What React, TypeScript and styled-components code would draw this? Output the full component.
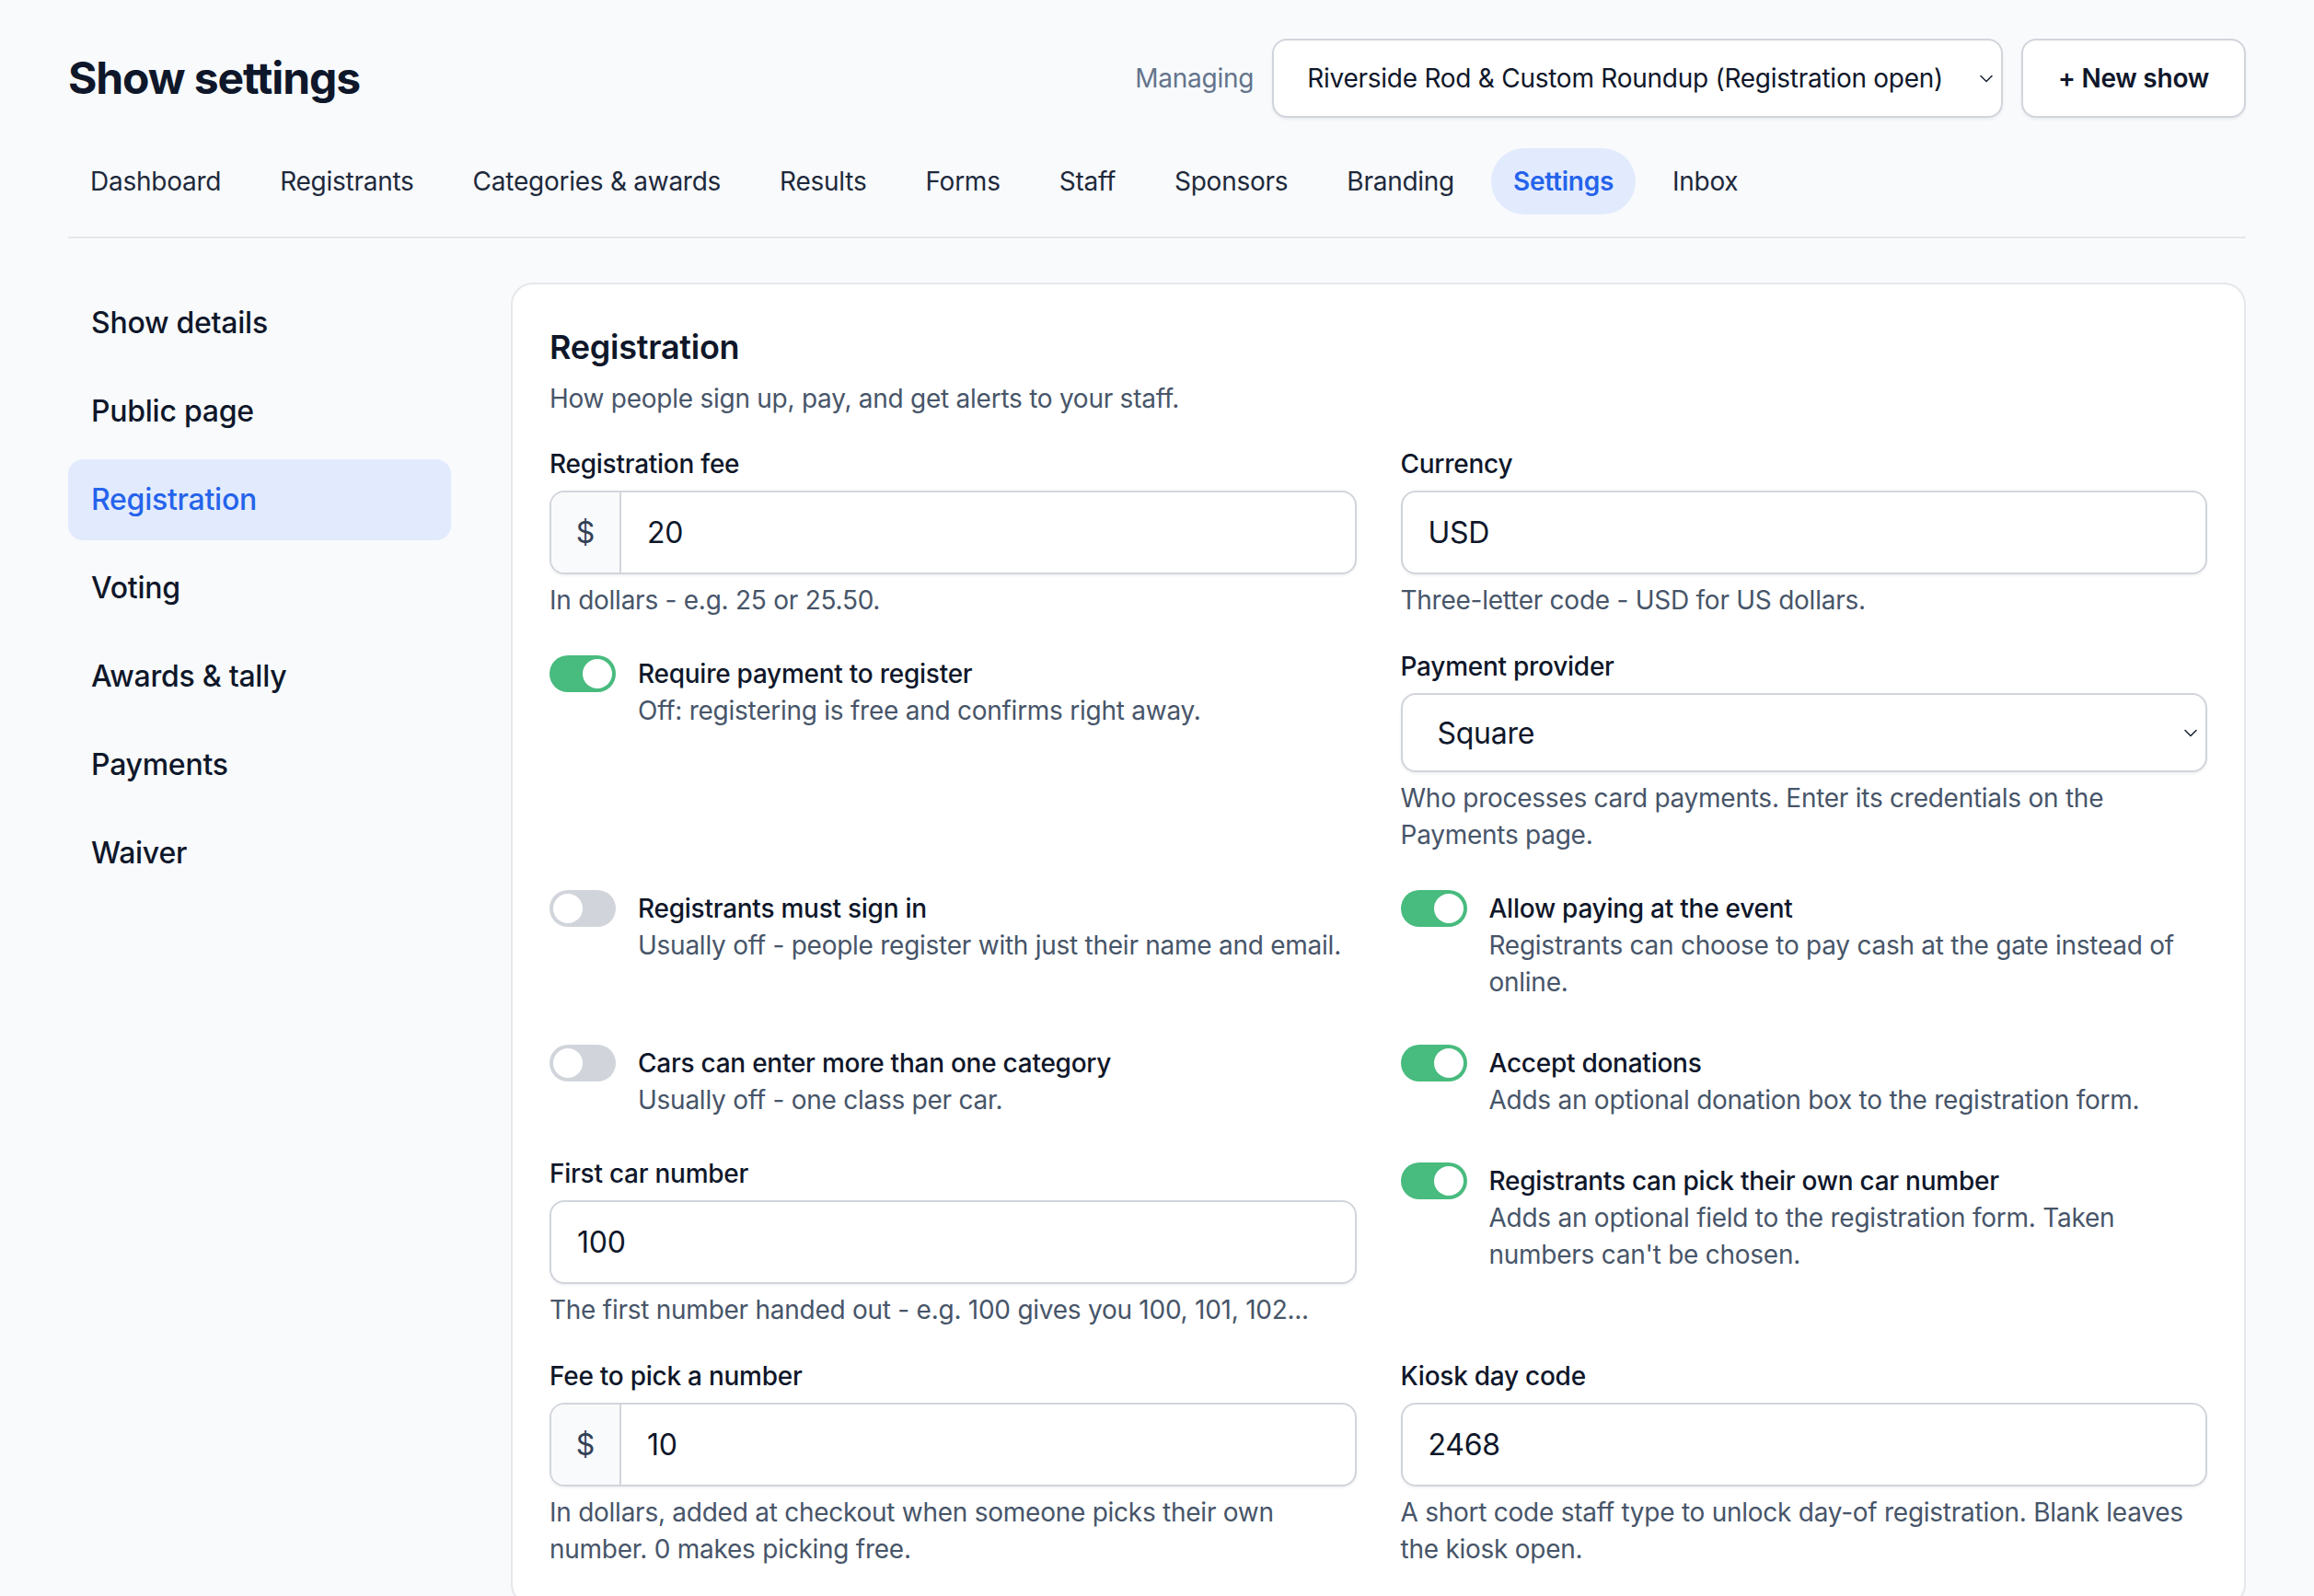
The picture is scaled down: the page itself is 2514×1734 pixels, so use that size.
import React from "react";
import styled, {createGlobalStyle} from "styled-components";

const GlobalStyle = createGlobalStyle`
  * {
    box-sizing: border-box;
  }
  body {
    margin: 0;
    background: #f8fafc;
    font-family: Inter, "Noto Sans", "Liberation Sans", sans-serif;
    letter-spacing: -0.016em;
    color: #0f172a;
  }
`;

const StyledPage = styled.div`
  height: 100vh;
  overflow: hidden;
  padding: 41px 74px 0;
`;

const StyledHeader = styled.header`
  display: flex;
  align-items: center;
  justify-content: space-between;
  height: 88px;
`;

const StyledTitle = styled.h1`
  margin: 0;
  font-size: 48px;
  line-height: 64px;
  font-weight: 700;
  letter-spacing: -1.1px;
  color: #0f172a;
`;

const StyledHeaderControls = styled.div`
  display: flex;
  align-items: center;
  gap: 20px;
`;

const StyledMuted = styled.span`
  font-size: 28px;
  line-height: 40px;
  color: #64748b;
`;

const StyledSelect = styled.div<{ $height: number; $padLeft: number; $fontSize: number }>`
  display: flex;
  align-items: center;
  gap: 40px;
  height: ${p => p.$height}px;
  padding: 0 9px 0 ${p => p.$padLeft}px;
  background: #fff;
  border: 2px solid #d1d5db;
  border-radius: 16px;
  box-shadow: 0 2px 3px rgba(15, 23, 42, 0.06);
  font-size: ${p => p.$fontSize}px;
  color: #0f172a;
  white-space: nowrap;
`;

const StyledSelectText = styled.span`
  flex: 1;
`;

const StyledButton = styled.button`
  height: 86px;
  padding: 0 38px;
  background: #fff;
  border: 2px solid #d1d5db;
  border-radius: 16px;
  box-shadow: 0 2px 3px rgba(15, 23, 42, 0.06);
  font-family: inherit;
  letter-spacing: inherit;
  font-size: 28px;
  font-weight: 600;
  color: #0f172a;
`;

const StyledTabBar = styled.nav`
  display: flex;
  gap: 16px;
  margin-top: 32px;
  padding-bottom: 24px;
  border-bottom: 2px solid #e5e7eb;
`;

const StyledTab = styled.a<{ $active?: boolean }>`
  padding: 16px 24px;
  border-radius: 9999px;
  font-size: 28px;
  line-height: 40px;
  font-weight: ${p => (p.$active ? 600 : 400)};
  color: ${p => (p.$active ? "#2563eb" : "#1e293b")};
  background: ${p => (p.$active ? "#e2ebfd" : "transparent")};
`;

const StyledBody = styled.div`
  display: flex;
  align-items: flex-start;
  gap: 65px;
  margin-top: 48px;
`;

const StyledSideNav = styled.aside`
  display: flex;
  flex-direction: column;
  gap: 8px;
  width: 416px;
  flex-shrink: 0;
`;

const StyledSideItem = styled.a<{ $active?: boolean }>`
  padding: 20px 25px;
  border-radius: 16px;
  font-size: 32px;
  line-height: 48px;
  font-weight: 500;
  color: ${p => (p.$active ? "#2563eb" : "#0f172a")};
  background: ${p => (p.$active ? "#e2ebfd" : "transparent")};
`;

const StyledCard = styled.section`
  flex: 1;
  background: #fff;
  border: 2px solid #e5e7eb;
  border-radius: 24px;
  padding: 40px;
`;

const StyledCardTitle = styled.h2`
  margin: 0;
  font-size: 36px;
  line-height: 56px;
  font-weight: 600;
  color: #0f172a;
`;

const StyledHelp = styled.p`
  margin: 8px 0 0;
  font-size: 28px;
  line-height: 40px;
  color: #475569;
`;

const StyledGrid = styled.div`
  display: grid;
  grid-template-columns: 1fr 1fr;
  column-gap: 48px;
  row-gap: 32px;
  margin-top: 31px;
`;

const StyledField = styled.div`
  display: flex;
  flex-direction: column;
`;

const StyledLabel = styled.label`
  font-size: 28px;
  line-height: 40px;
  font-weight: 500;
  color: #0f172a;
  margin-bottom: 9px;
`;

const StyledInputBox = styled.div`
  display: flex;
  height: 91px;
  background: #fff;
  border: 2px solid #d1d5db;
  border-radius: 16px;
  box-shadow: 0 2px 3px rgba(15, 23, 42, 0.05);
  overflow: hidden;
`;

const StyledPrefix = styled.span`
  display: flex;
  align-items: center;
  justify-content: center;
  width: 76px;
  background: #f8fafc;
  border-right: 2px solid #d1d5db;
  font-size: 32px;
  color: #334155;
`;

const StyledValue = styled.span`
  display: flex;
  align-items: center;
  padding: 0 28px;
  font-size: 32px;
  color: #0f172a;
`;

const StyledToggleRow = styled.div`
  display: flex;
  align-items: flex-start;
  gap: 24px;
  padding: 8px 0;
`;

const StyledSwitch = styled.span<{ $on: boolean }>`
  display: flex;
  justify-content: ${p => (p.$on ? "flex-end" : "flex-start")};
  flex-shrink: 0;
  width: 72px;
  height: 40px;
  padding: 4px;
  border-radius: 20px;
  background: ${p => (p.$on ? "#48bb7e" : "#d1d5db")};
`;

const StyledKnob = styled.span`
  width: 32px;
  height: 32px;
  border-radius: 50%;
  background: #fff;
`;

const StyledToggleText = styled.div`
  display: flex;
  flex-direction: column;
`;

const StyledToggleTitle = styled.span`
  font-size: 28px;
  line-height: 40px;
  font-weight: 500;
  color: #0f172a;
`;

const StyledToggleDesc = styled.span`
  font-size: 28px;
  line-height: 40px;
  color: #475569;
`;

function Chevron() {
    return (
        <svg width="14" height="9" viewBox="0 0 14 9" fill="none">
            <path d="M1 1.5l6 6 6-6" stroke="#1f2937" strokeWidth="1.6" strokeLinecap="round" strokeLinejoin="round" />
        </svg>
    );
}

function Toggle({on, title, desc}: { on: boolean; title: string; desc: string }) {
    return (
        <StyledToggleRow>
            <StyledSwitch $on={on}>
                <StyledKnob />
            </StyledSwitch>
            <StyledToggleText>
                <StyledToggleTitle>{title}</StyledToggleTitle>
                <StyledToggleDesc>{desc}</StyledToggleDesc>
            </StyledToggleText>
        </StyledToggleRow>
    );
}

function Field({label, value, prefix, help}: { label: string; value: string; prefix?: string; help: string }) {
    return (
        <StyledField>
            <StyledLabel>{label}</StyledLabel>
            <StyledInputBox>
                {prefix && <StyledPrefix>{prefix}</StyledPrefix>}
                <StyledValue>{value}</StyledValue>
            </StyledInputBox>
            <StyledHelp>{help}</StyledHelp>
        </StyledField>
    );
}

const tabs = ["Dashboard", "Registrants", "Categories & awards", "Results", "Forms", "Staff", "Sponsors", "Branding", "Settings", "Inbox"];
const sections = ["Show details", "Public page", "Registration", "Voting", "Awards & tally", "Payments", "Waiver"];

export default function App() {
    return (
        <StyledPage>
            <GlobalStyle />
            <StyledHeader>
                <StyledTitle>Show settings</StyledTitle>
                <StyledHeaderControls>
                    <StyledMuted>Managing</StyledMuted>
                    <StyledSelect $height={86} $padLeft={36} $fontSize={28}>
                        <StyledSelectText>Riverside Rod &amp; Custom Roundup (Registration open)</StyledSelectText>
                        <Chevron />
                    </StyledSelect>
                    <StyledButton>+ New show</StyledButton>
                </StyledHeaderControls>
            </StyledHeader>

            <StyledTabBar>
                {tabs.map(t => (
                    <StyledTab key={t} $active={t === "Settings"}>{t}</StyledTab>
                ))}
            </StyledTabBar>

            <StyledBody>
                <StyledSideNav>
                    {sections.map(s => (
                        <StyledSideItem key={s} $active={s === "Registration"}>{s}</StyledSideItem>
                    ))}
                </StyledSideNav>

                <StyledCard>
                    <StyledCardTitle>Registration</StyledCardTitle>
                    <StyledHelp>How people sign up, pay, and get alerts to your staff.</StyledHelp>

                    <StyledGrid>
                        <Field label="Registration fee" prefix="$" value="20" help="In dollars - e.g. 25 or 25.50." />
                        <Field label="Currency" value="USD" help="Three-letter code - USD for US dollars." />

                        <Toggle on title="Require payment to register" desc="Off: registering is free and confirms right away." />
                        <StyledField>
                            <StyledLabel>Payment provider</StyledLabel>
                            <StyledSelect $height={86} $padLeft={38} $fontSize={32}>
                                <StyledSelectText>Square</StyledSelectText>
                                <Chevron />
                            </StyledSelect>
                            <StyledHelp>Who processes card payments. Enter its credentials on the Payments page.</StyledHelp>
                        </StyledField>

                        <Toggle on={false} title="Registrants must sign in" desc="Usually off - people register with just their name and email." />
                        <Toggle on title="Allow paying at the event" desc="Registrants can choose to pay cash at the gate instead of online." />

                        <Toggle on={false} title="Cars can enter more than one category" desc="Usually off - one class per car." />
                        <Toggle on title="Accept donations" desc="Adds an optional donation box to the registration form." />

                        <Field label="First car number" value="100" help="The first number handed out - e.g. 100 gives you 100, 101, 102..." />
                        <Toggle on title="Registrants can pick their own car number" desc="Adds an optional field to the registration form. Taken numbers can't be chosen." />

                        <Field label="Fee to pick a number" prefix="$" value="10" help="In dollars, added at checkout when someone picks their own number. 0 makes picking free." />
                        <Field label="Kiosk day code" value="2468" help="A short code staff type to unlock day-of registration. Blank leaves the kiosk open." />
                    </StyledGrid>
                </StyledCard>
            </StyledBody>
        </StyledPage>
    );
}
